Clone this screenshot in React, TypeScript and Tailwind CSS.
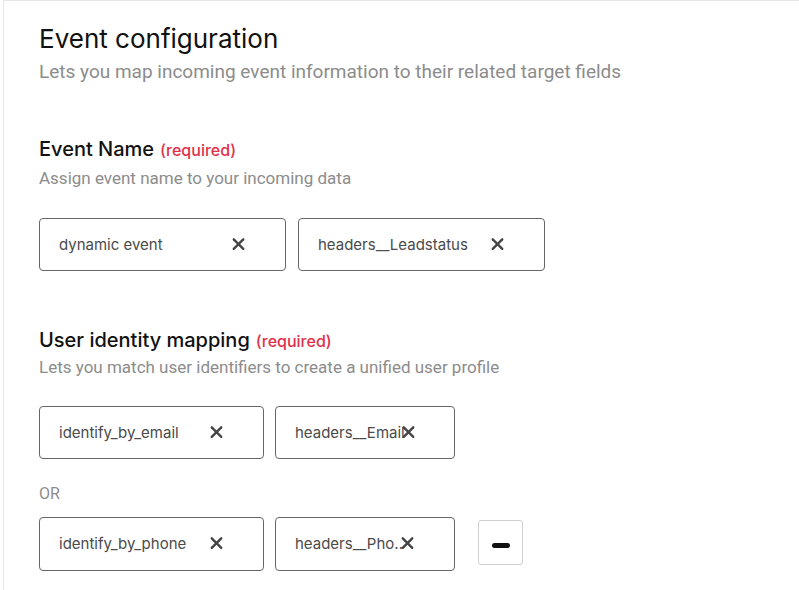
import { X } from 'lucide-react'

function Field({ value, width, height, iconLeft }: { value: string; width: string; height: string; iconLeft: string }) {
    return (
        <div className={`relative ${height} ${width} rounded-[4px] border border-[#666] bg-white`}>
            <span className="absolute left-[19px] top-1/2 -translate-y-1/2 text-[15px] text-[#4a4a4a]">{value}</span>
            <X className={`absolute top-1/2 -translate-y-[55%] ${iconLeft} h-[19px] w-[19px] text-[#444]`} strokeWidth={3} />
        </div>
    )
}

export default function App() {
    return (
        <div className="min-h-[590px] bg-white" style={{ fontFamily: 'Inter, "Noto Sans", sans-serif' }}>
            <div className="ml-[3px] min-h-[590px] border-l border-t border-[#e6e6e6] pl-[35px] pt-[22px]">
                <h1 className="text-[26px] leading-[32px] text-[#111]">Event configuration</h1>
                <p className="mt-[5px] text-[19px] leading-[24px] text-[#8c8c8c]" style={{ fontFamily: 'Roboto, sans-serif' }}>
                    Lets you map incoming event information to their related target fields
                </p>

                <div className="mt-[51px] flex items-baseline gap-[6px]">
                    <h2 className="text-[20px] font-medium leading-[28px] text-[#111]">Event Name</h2>
                    <span className="text-[16px] font-medium text-[#e2304a]">(required)</span>
                </div>
                <p className="mt-[4px] text-[17px] leading-[22px] text-[#8c8c8c]" style={{ fontFamily: 'Roboto, sans-serif' }}>
                    Assign event name to your incoming data
                </p>
                <div className="mt-[29px] flex gap-[12px]">
                    <Field value="dynamic event" width="w-[247px]" height="h-[53px]" iconLeft="left-[189px]" />
                    <Field value="headers__Leadstatus" width="w-[247px]" height="h-[53px]" iconLeft="left-[189px]" />
                </div>

                <div className="mt-[55px] flex items-baseline gap-[6px]">
                    <h2 className="text-[20px] font-medium leading-[28px] text-[#111]">User identity mapping</h2>
                    <span className="text-[16px] font-medium text-[#e2304a]">(required)</span>
                </div>
                <p className="mt-[2px] text-[17px] leading-[22px] text-[#8c8c8c]" style={{ fontFamily: 'Roboto, sans-serif' }}>
                    Lets you match user identifiers to create a unified user profile
                </p>
                <div className="mt-[28px] flex gap-[11px]">
                    <Field value="identify_by_email" width="w-[225px]" height="h-[53px]" iconLeft="left-[167px]" />
                    <Field value="headers__Email" width="w-[180px]" height="h-[53px]" iconLeft="left-[123px]" />
                </div>

                <p className="mt-[25px] text-[16px] leading-[20px] text-[#8c8c8c]" style={{ fontFamily: 'Roboto, sans-serif' }}>OR</p>

                <div className="mt-[13px] flex items-center gap-[11px]">
                    <Field value="identify_by_phone" width="w-[225px]" height="h-[54px]" iconLeft="left-[167px]" />
                    <Field value="headers__Pho.." width="w-[180px]" height="h-[54px]" iconLeft="left-[122px]" />
                    <button className="mb-[3px] ml-[12px] flex h-[45px] w-[45px] items-center justify-center rounded-[3px] border border-[#cfcfcf] bg-white">
                        <span className="mt-[5px] h-[5px] w-[18px] rounded-full bg-[#111]" />
                    </button>
                </div>
            </div>
        </div>
    )
}
